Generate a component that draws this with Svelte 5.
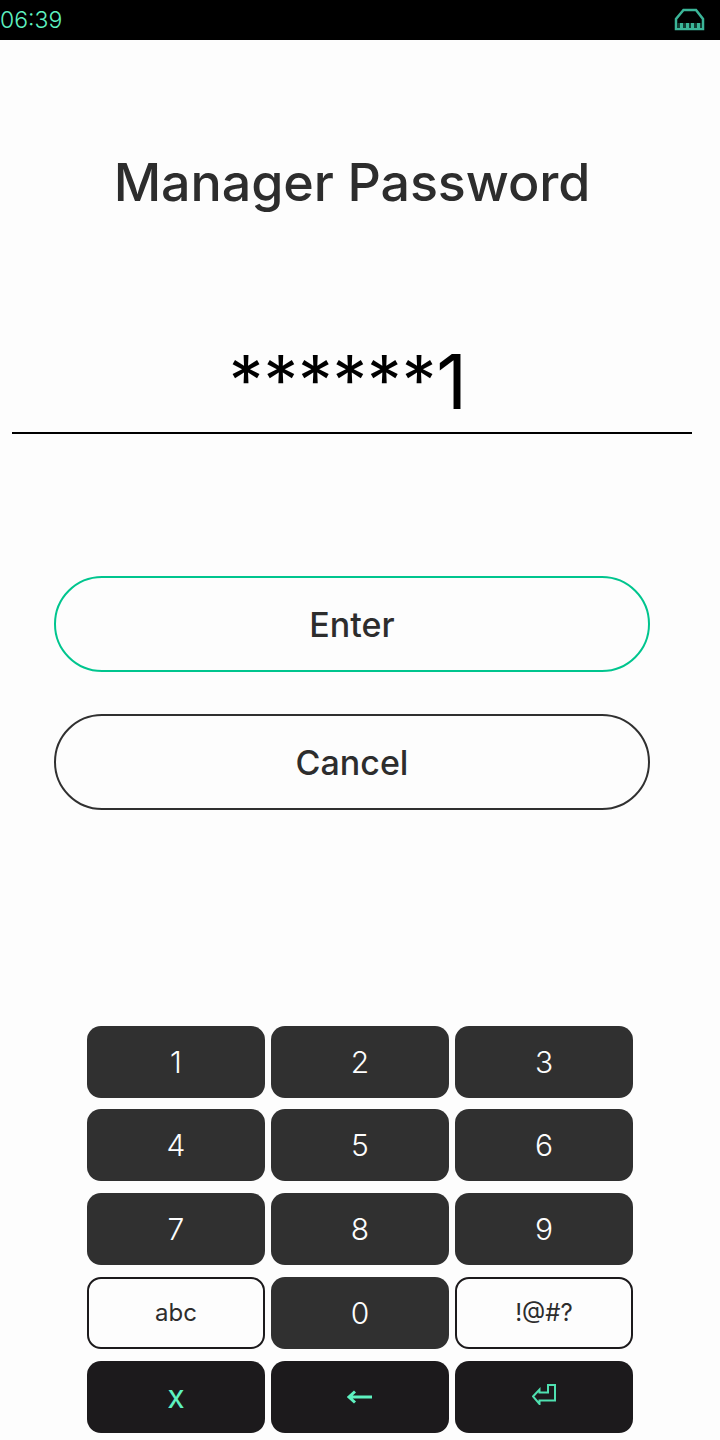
<script>
	let keys = [
		{ label: '1' }, { label: '2' }, { label: '3' },
		{ label: '4' }, { label: '5' }, { label: '6' },
		{ label: '7' }, { label: '8' }, { label: '9' },
		{ label: 'abc', kind: 'alt' }, { label: '0' }, { label: '!@#?', kind: 'alt' }
	];
</script>

<div class="screen">
	<header class="status">
		<span class="time">06:39</span>
		<svg class="net" width="32" height="24" viewBox="0 0 32 24" fill="none">
			<path d="M2 21V11L9.500 2H22L29 11V21Z" stroke="#3bb598" stroke-width="2.500" />
			<path d="M3 20V15H28V20Z" fill="#123c32" />
			<path d="M6 20V15H9V20ZM12 20V15H15V20ZM17 20V15H20V20ZM23 20V15H26V20Z" fill="#3bb598" />
		</svg>
	</header>

	<h1>Manager Password</h1>

	<div class="field">
		<span class="value">******<span class="last">1</span></span>
	</div>

	<div class="actions">
		<button class="pill enter">Enter</button>
		<button class="pill">Cancel</button>
	</div>

	<div class="keypad">
		{#each keys as key}
			<button class="key {key.kind || ''}">{key.label}</button>
		{/each}
		<button class="key ctrl x">x</button>
		<button class="key ctrl">
			<svg width="26" height="14" viewBox="0 0 26 14" fill="none">
				<path d="M8 1.500L2 7L8 12.500M2 7H25" stroke="#5ef2c0" stroke-width="3" />
			</svg>
		</button>
		<button class="key ctrl">
			<svg class="return" width="24" height="21" viewBox="0 0 24 21" fill="none">
				<path d="M23 1V16.500H7.500V20L1 12.500L7.500 5.500V8.500H16V1Z" stroke="#4fe0b0" stroke-width="2" />
			</svg>
		</button>
	</div>
</div>

<style>
	:global(body) {
		margin: 0;
		background: #fdfdfd;
	}

	.screen {
		width: 720px;
		height: 1440px;
		display: flex;
		flex-direction: column;
		background: #fdfdfd;
		font-family: Inter, "Liberation Sans", sans-serif;
		color: #2d2d2d;
		overflow: hidden;
	}

	.status {
		height: 40px;
		flex: none;
		background: #000;
		display: flex;
		align-items: center;
		justify-content: space-between;
		padding-right: 14px;
	}

	.time {
		font-size: 23px;
		font-weight: 300;
		color: #5ef2c0;
	}

	h1 {
		margin: 111px 0 0;
		height: 64px;
		line-height: 64px;
		font-size: 52px;
		font-weight: 450;
		letter-spacing: -0.100px;
		text-align: center;
		padding-right: 16px;
	}

	.field {
		margin: 130px 28px 0 12px;
		height: 89px;
		box-sizing: border-box;
		border-bottom: 2px solid #000;
		text-align: center;
	}

	.value {
		display: block;
		font-size: 69px;
		line-height: 70px;
		padding-right: 8px;
		color: #000;
	}

	.last {
		font-size: 76px;
		vertical-align: -4px;
	}

	.actions {
		margin: 142px 70px 0 54px;
		display: flex;
		flex-direction: column;
		gap: 42px;
	}

	.pill {
		height: 96px;
		border: 2px solid #303030;
		border-radius: 48px;
		background: #fdfdfd;
		font: inherit;
		font-size: 34px;
		font-weight: 450;
		color: #2d2d2d;
	}

	.enter {
		border-color: #00c58e;
	}

	.keypad {
		margin: 215.600px 87px 0;
		display: grid;
		grid-template-columns: repeat(3, 178px);
		grid-auto-rows: 72px;
		column-gap: 6px;
		row-gap: 11.750px;
	}

	.key {
		border: none;
		border-radius: 14px;
		background: #303030;
		color: #fdfdfd;
		font: inherit;
		font-size: 30px;
		font-weight: 300;
		padding: 0;
	}

	.alt {
		background: #fdfdfd;
		border: 2px solid #1c1a1c;
		color: #2d2d2d;
		font-size: 24px;
		font-weight: 400;
	}

	.ctrl {
		background: #1c1a1c;
		color: #5ef2c0;
		display: flex;
		align-items: center;
		justify-content: center;
	}

	.x {
		font-size: 32px;
		font-weight: 400;
	}

	.return {
		margin-bottom: 4px;
	}
</style>
